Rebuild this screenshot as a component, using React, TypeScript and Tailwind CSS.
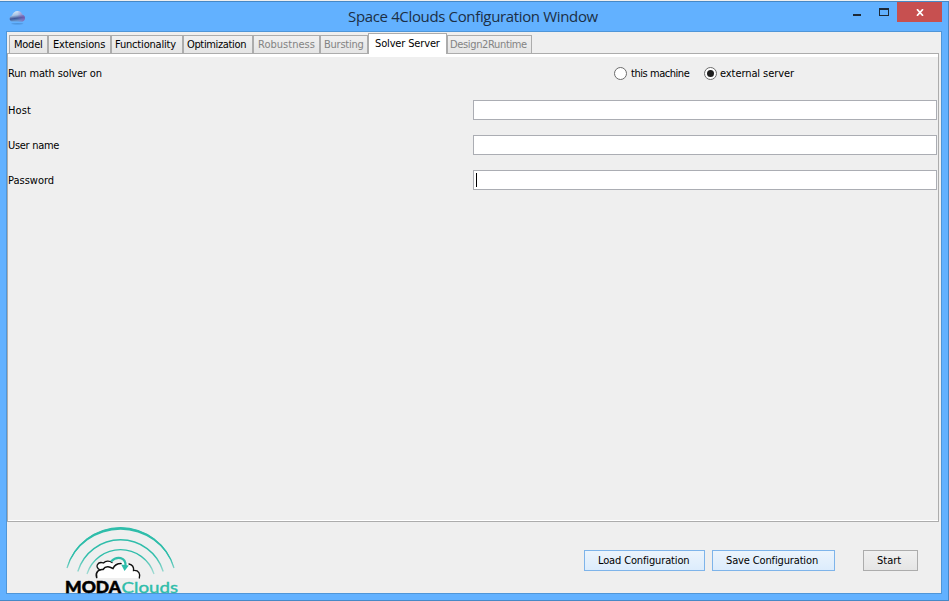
const tabs = [
  { name: 'Model', box: 'w-[39px] pl-[4px]', text: 'tracking-[-0.25px]' },
  { name: 'Extensions', box: 'w-[63px] pl-[4px]', text: 'tracking-[-0.15px]' },
  { name: 'Functionality', box: 'w-[72px] pl-[3px]', text: 'tracking-[-0.18px]' },
  { name: 'Optimization', box: 'w-[70px] pl-[3px]', text: 'tracking-[-0.35px]' },
  { name: 'Robustness', box: 'w-[67px] pl-[4px]', text: 'tracking-[0.02px]', disabled: true },
  { name: 'Bursting', box: 'w-[48px] pl-[3px]', text: 'tracking-[-0.25px]', disabled: true },
  { name: 'Solver Server', box: 'w-[79px] pl-[6px]', text: 'tracking-[-0.15px]', active: true },
  { name: 'Design2Runtime', box: 'w-[85px] pl-[2px]', text: 'tracking-[-0.35px]', disabled: true },
];

function CloudIcon() {
  return (
    <svg className="ml-[9px] mt-[7px] h-[17px] w-[17px]" viewBox="0 0 17 17">
      <defs>
        <linearGradient id="cloud" x1="0" y1="0" x2="0.2" y2="1">
          <stop offset="0" stopColor="#dceefc" />
          <stop offset="0.45" stopColor="#a9c4e4" />
          <stop offset="0.75" stopColor="#3f5798" />
          <stop offset="1" stopColor="#6a9bd0" />
        </linearGradient>
        <linearGradient id="violet" x1="0" y1="0" x2="1" y2="0">
          <stop offset="0.5" stopColor="#8b5bc0" stopOpacity="0" />
          <stop offset="1" stopColor="#8a5cb8" stopOpacity="0.75" />
        </linearGradient>
      </defs>
      <path d="M3 12.500C-.2 12 0 7.500 3 6.500C4 3.500 6 2 8.500 2C11 2 12.500 3.500 13 5.500C16.500 6 17 11.500 13.500 12.500z" fill="url(#cloud)" />
      <path d="M3 12.500C-.2 12 0 7.500 3 6.500C4 3.500 6 2 8.500 2C11 2 12.500 3.500 13 5.500C16.500 6 17 11.500 13.500 12.500z" fill="url(#violet)" />
      <ellipse cx="8.300" cy="14.700" rx="6" ry="0.800" fill="#3f82c4" opacity="0.6" />
    </svg>
  );
}

function Logo() {
  return (
    <svg className="h-[68px] w-[116px] overflow-visible" viewBox="64 525 116 68">
      <defs>
        <linearGradient id="arc" x1="0" y1="528" x2="0" y2="574" gradientUnits="userSpaceOnUse">
          <stop offset="0.6" stopColor="#2fbdaa" />
          <stop offset="1" stopColor="#2fbdaa" stopOpacity="0.4" />
        </linearGradient>
      </defs>
      <g fill="url(#arc)">
        <path d="M66.700 568A55.800 55.800 0 0 1 174.300 568A57 57 0 0 0 66.700 568z" />
      </g>
      <g fill="none" stroke="url(#arc)">
        <path d="M67 568A55.800 55.800 0 0 1 174 568" strokeWidth="1.300" />
        <path d="M77.800 571.500A44.600 44.600 0 0 1 163.200 571.500" strokeWidth="1.400" />
        <path d="M87 574A35.200 35.200 0 0 1 154 574" strokeWidth="1.300" />
      </g>
      <path d="M96.500 578C95 573 99 569 101 569C94 566 98 561 104 562C106 560 112 561 114 564C118 562 124 561 128 564C132 563 134 566 133.500 570C139 569 141 574 139 578z" fill="#fff" />
      <g fill="none" stroke="#111" strokeWidth="1.300" strokeLinecap="round">
        <path d="M100 570C94 567 98 561 103.500 563C106 560 110 561 112 562.500" />
        <path d="M96.700 577.500C95 572 99 569 103 569.500C106 565 110 567 113 568.500C115 564 118 563.500 121 563.500" strokeWidth="1.600" />
        <path d="M129 564C133 565 134 567 133.500 570.500C139 570 140.500 574 139.300 578" />
      </g>
      <path d="M111 561.500C117 555.500 126 557 125.500 566" fill="none" stroke="#2fbdaa" strokeWidth="2.200" />
      <path d="M121.200 564.500L128.800 565.500L124.500 571z" fill="#2fbdaa" />
      <text x="65" y="593" textLength="56" lengthAdjust="spacingAndGlyphs" strokeWidth="0.500" className="fill-black stroke-black font-['Lato'] text-[16px] font-black [font-stretch:normal]">MODA</text>
      <text x="121.500" y="593" textLength="56.500" lengthAdjust="spacingAndGlyphs" strokeWidth="0.400" className="fill-[#2fbdaa] stroke-[#2fbdaa] font-['Lato'] text-[16px] [font-stretch:normal]">Clouds</text>
    </svg>
  );
}

function Field({ label, track, focused }: { label: string; track: string; focused?: boolean }) {
  return (
    <div className="flex h-[20px] items-center">
      <div className={`w-[465px] pt-[2px] leading-[14px] ${track}`}>{label}</div>
      <div className="flex h-[20px] w-[464px] items-center border border-[#abadb3] bg-white pl-[2px]">
        {focused && <div className="h-[14px] w-px bg-black" />}
      </div>
    </div>
  );
}

function Radio({ checked }: { checked?: boolean }) {
  return (
    <div className="flex h-[13px] w-[13px] shrink-0 items-center justify-center rounded-full border border-[#6b6b6b] bg-white">
      {checked && <div className="h-[7px] w-[7px] rounded-full bg-[#1f1f1f]" />}
    </div>
  );
}

export default function App() {
  return (
    <div className="flex h-[601px] w-[949px] flex-col overflow-hidden border-t border-[#efefef] bg-[#62b1ff] font-['DejaVu_Sans_Condensed','DejaVu_Sans',sans-serif] text-[11px] text-black [font-stretch:condensed]">
      <div className="flex h-[600px] flex-col border-y border-r border-[#4688c6]">
        <div className="flex h-[29px] shrink-0">
          <div className="w-[348px]">
            <CloudIcon />
          </div>
          <div className="w-[501px] whitespace-nowrap pt-[4px] font-['Open_Sans',sans-serif] text-[15px] leading-[20px] tracking-[-0.35px] text-[#1c2f45] [font-stretch:normal]">
            Space 4Clouds Configuration Window
          </div>
          <div className="flex w-[93px]">
            <svg className="h-[20px] w-[48px]" viewBox="-8 0 48 20" shapeRendering="crispEdges">
              <rect x="-4" y="12" width="8" height="2" fill="#1d2a38" />
              <rect x="22.500" y="6.500" width="9" height="7" fill="none" stroke="#1d2a38" />
              <rect x="22" y="6" width="10" height="2" fill="#1d2a38" />
            </svg>
            <div className="flex h-[20px] w-[45px] items-center justify-center bg-[#c75050]">
              <svg className="h-[7px] w-[8px]" viewBox="0 0 8 7">
                <path d="M1 .2L7 6.800M7 .2L1 6.800" stroke="#fff" strokeWidth="1.700" />
              </svg>
            </div>
          </div>
        </div>

        <div className="ml-[6px] flex h-[563px] w-[936px] flex-col border border-[#4f96d8] bg-[#efefef]">
          <div className="flex h-[21px] items-end pl-[2px]">
            {tabs.map((t) =>
              t.active ? (
                <div key={t.name} className={`relative z-10 -mb-px flex h-[21px] shrink-0 border border-b-0 border-[#acacac] bg-white pt-[3px] leading-[14px] ${t.box}`}>
                  <span className={`whitespace-nowrap ${t.text}`}>{t.name}</span>
                </div>
              ) : (
                <div key={t.name} className={`flex h-[18px] shrink-0 border border-b-0 border-[#acacac] bg-linear-to-b from-[#f0f0f0] to-[#e5e5e5] pt-[2px] leading-[14px] ${t.box} ${t.disabled ? 'text-[#838383]' : ''}`}>
                  <span className={`whitespace-nowrap ${t.text}`}>{t.name}</span>
                </div>
              ),
            )}
          </div>
          <div className="flex h-[469px] w-[932px] flex-col border border-[#acacac]">
            <div className="flex h-[467px] flex-col border-b border-t-[3px] border-white">
              <div className="flex h-[33px] items-center">
                <div className="w-[606px] pt-[2px] tracking-[-0.15px]">Run math solver on</div>
                <Radio />
                <div className="ml-[4px] w-[73px] whitespace-nowrap pt-[2px] tracking-[-0.45px]">this machine</div>
                <Radio checked />
                <div className="ml-[3px] whitespace-nowrap pt-[2px] tracking-[-0.08px]">external server</div>
              </div>
              <div className="flex flex-col gap-[15px] pt-[10px]">
                <Field label="Host" track="tracking-[0.1px]" />
                <Field label="User name" track="tracking-[-0.3px]" />
                <Field label="Password" track="tracking-[0px]" focused />
              </div>
            </div>
          </div>
          <div className="flex h-[71px]">
            <div className="w-[577px] pl-[57px] pt-[3px]">
              <Logo />
            </div>
            <div className="flex items-start pt-[28px] leading-[19px]">
              <div className="h-[21px] w-[121px] whitespace-nowrap border border-[#7eb4ea] bg-linear-to-b from-[#ecf4fc] to-[#dcecfc] pl-[13px] tracking-[-0.14px]">Load Configuration</div>
              <div className="ml-[7px] h-[21px] w-[123px] whitespace-nowrap border border-[#7eb4ea] bg-linear-to-b from-[#ecf4fc] to-[#dcecfc] pl-[13px] tracking-[-0.14px]">Save Configuration</div>
              <div className="ml-[28px] h-[21px] w-[55px] border border-[#acacac] bg-linear-to-b from-[#f0f0f0] to-[#e5e5e5] pl-[13px]">Start</div>
            </div>
          </div>
        </div>
      </div>
    </div>
  );
}
